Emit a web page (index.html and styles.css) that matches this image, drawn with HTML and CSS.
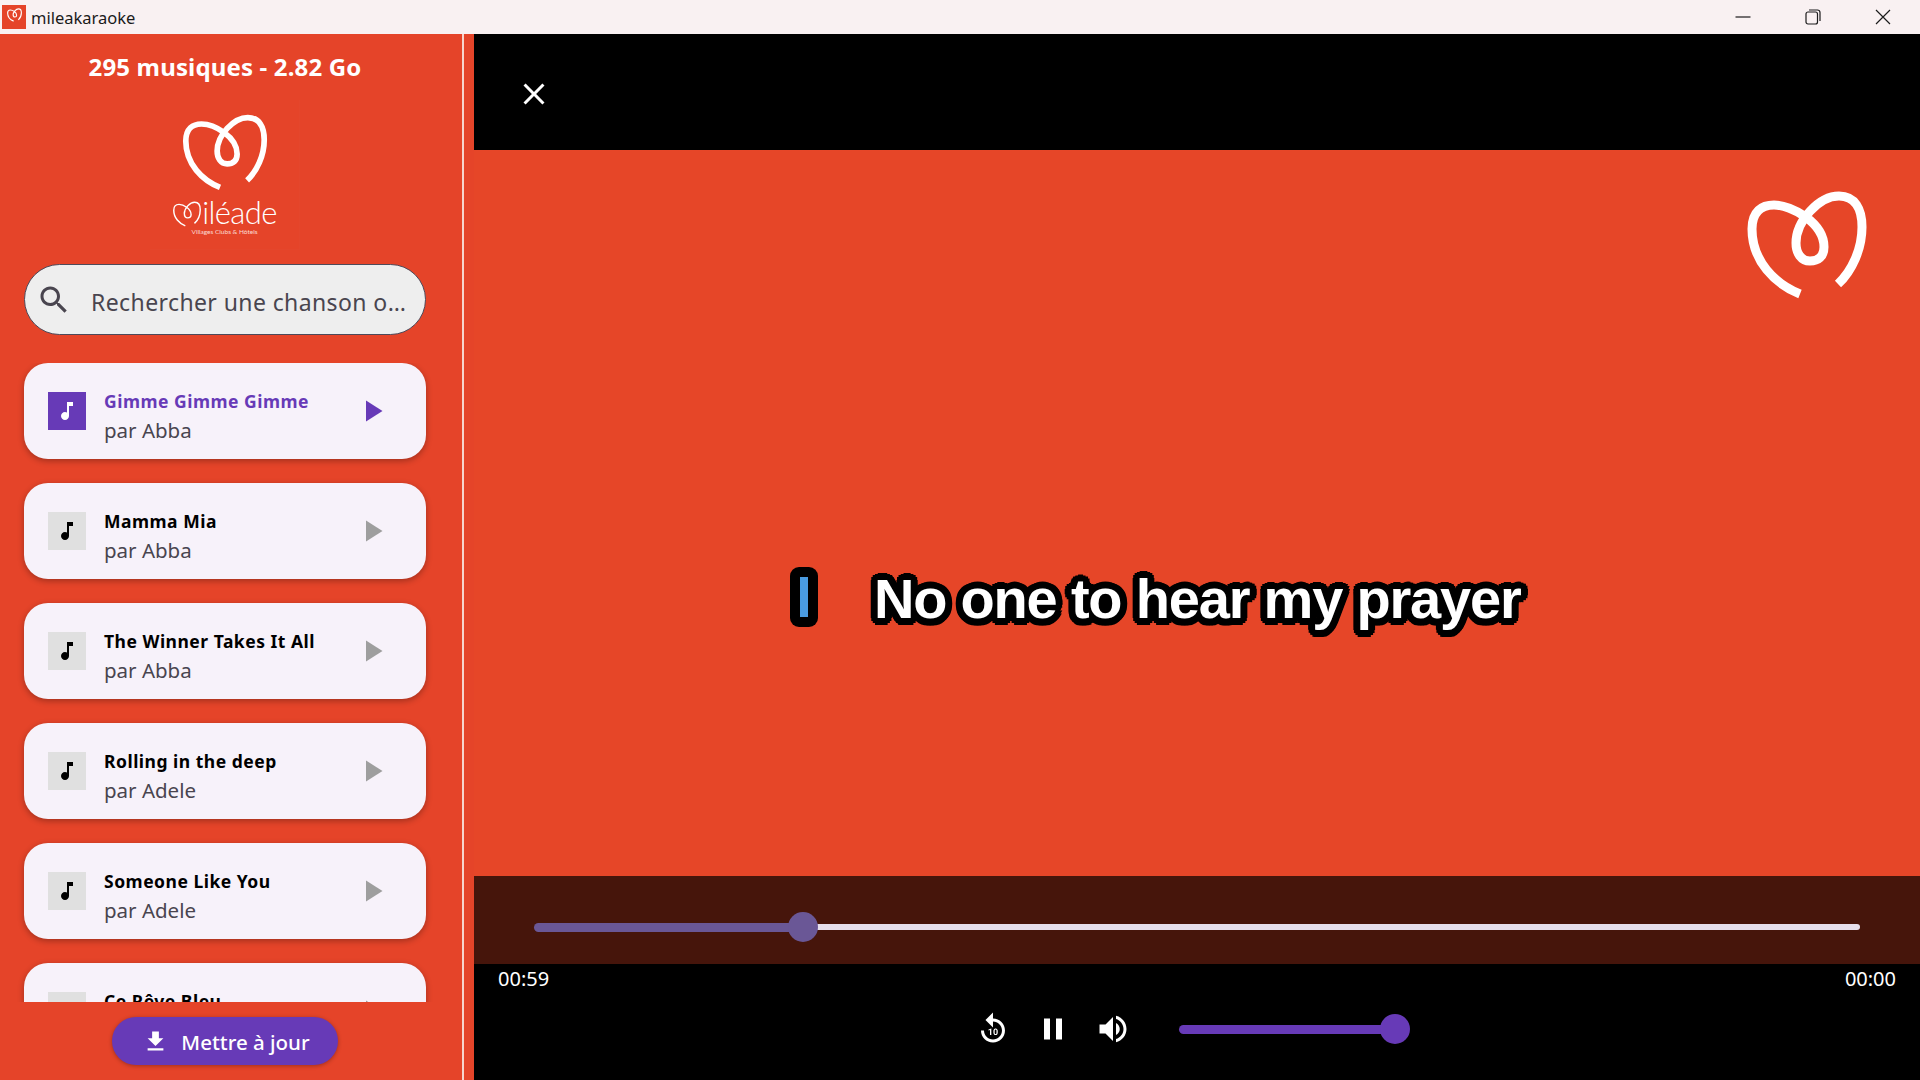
FILE: index.html
```html
<!DOCTYPE html>
<html lang="fr">
<head>
    <meta charset="UTF-8">
    <title>mileakaraoke</title>
    <link rel="stylesheet" href="styles.css">
</head>
<body>
    <svg class="defs" width="0" height="0">
        <symbol id="heart" viewBox="0 0 120 108">
            <path d="M53 103 C28 93 5 70 5 38 C5 20 15 14 27 14 C45 14 77 32 77 56 C77 66 71 70 63 70 C54 70 49 62 49 52 C49 30 72 5 92 5 C108 5 115 18 115 36 C115 58 105 80 91 93"/>
        </symbol>
        <symbol id="note" viewBox="0 0 24 24"><path d="M12 3v10.55c-.59-.34-1.27-.55-2-.55-2.21 0-4 1.79-4 4s1.79 4 4 4 4-1.79 4-4V7h4V3h-6z"/></symbol>
        <symbol id="play" viewBox="0 0 24 24"><path d="M8 5v14l11-7z"/></symbol>
    </svg>

    <header class="titlebar">
        <span class="app-icon"><svg class="heart-mini"><use href="#heart"/></svg></span>
        <span class="app-name">mileakaraoke</span>
        <div class="win-buttons">
            <span class="win-btn"><svg width="16" height="16" viewBox="0 0 16 16"><path d="M0.5 8h15"/></svg></span>
            <span class="win-btn"><svg width="16" height="16" viewBox="0 0 16 16"><rect x="1" y="3" width="11.5" height="12" rx="2"/><path d="M4 1h8.5a2.5 2.5 0 0 1 2.5 2.5V12"/></svg></span>
            <span class="win-btn"><svg width="16" height="16" viewBox="0 0 16 16"><path d="M1 1l14 14M15 1L1 15"/></svg></span>
        </div>
    </header>

    <div class="body">
        <aside class="sidebar">
            <h1 class="count">295 musiques - 2.82 Go</h1>

            <div class="logo">
                <svg class="heart-big"><use href="#heart"/></svg>
                <div class="wordmark">
                    <svg class="heart-word"><use href="#heart"/></svg>
                    <span class="wordmark-text">iléade</span>
                </div>
                <div class="tagline">Villages Clubs &amp; Hôtels</div>
            </div>

            <div class="search">
                <svg class="search-icon" viewBox="0 0 24 24"><path d="M15.5 14h-.79l-.28-.27C15.41 12.59 16 11.11 16 9.5 16 5.91 13.09 3 9.5 3S3 5.91 3 9.5 5.91 16 9.5 16c1.61 0 3.09-.59 4.23-1.57l.27.28v.79l5 4.99L20.49 19l-4.99-5zm-6 0C7.01 14 5 11.99 5 9.5S7.01 5 9.5 5 14 7.01 14 9.5 11.99 14 9.5 14z"/></svg>
                <span class="search-text">Rechercher une chanson o…</span>
            </div>

            <div class="songs">
                <div class="song active">
                    <span class="thumb"><svg><use href="#note"/></svg></span>
                    <div class="song-info"><div class="song-title">Gimme Gimme Gimme</div><div class="song-artist">par Abba</div></div>
                    <svg class="song-play"><use href="#play"/></svg>
                </div>
                <div class="song">
                    <span class="thumb"><svg><use href="#note"/></svg></span>
                    <div class="song-info"><div class="song-title">Mamma Mia</div><div class="song-artist">par Abba</div></div>
                    <svg class="song-play"><use href="#play"/></svg>
                </div>
                <div class="song">
                    <span class="thumb"><svg><use href="#note"/></svg></span>
                    <div class="song-info"><div class="song-title">The Winner Takes It All</div><div class="song-artist">par Abba</div></div>
                    <svg class="song-play"><use href="#play"/></svg>
                </div>
                <div class="song">
                    <span class="thumb"><svg><use href="#note"/></svg></span>
                    <div class="song-info"><div class="song-title">Rolling in the deep</div><div class="song-artist">par Adele</div></div>
                    <svg class="song-play"><use href="#play"/></svg>
                </div>
                <div class="song">
                    <span class="thumb"><svg><use href="#note"/></svg></span>
                    <div class="song-info"><div class="song-title">Someone Like You</div><div class="song-artist">par Adele</div></div>
                    <svg class="song-play"><use href="#play"/></svg>
                </div>
                <div class="song">
                    <span class="thumb"><svg><use href="#note"/></svg></span>
                    <div class="song-info"><div class="song-title">Ce Rêve Bleu</div><div class="song-artist">&nbsp;</div></div>
                    <svg class="song-play"><use href="#play"/></svg>
                </div>
            </div>

            <div class="footer">
                <button class="update">
                    <svg viewBox="0 0 24 24"><path d="M19 9h-4V3H9v6H5l7 7 7-7zM5 18v2h14v-2H5z"/></svg>
                    Mettre à jour
                </button>
            </div>
        </aside>
        <div class="divider"></div>

        <main class="player">
            <div class="top-bar">
                <svg class="close" viewBox="0 0 24 24"><path d="M19 6.41L17.59 5 12 10.59 6.41 5 5 6.41 10.59 12 5 17.59 6.41 19 12 13.41 17.59 19 19 17.59 13.41 12z"/></svg>
            </div>

            <div class="video">
                <svg class="heart-corner"><use href="#heart"/></svg>
                <div class="lyrics">
                    <span class="cursor"><span class="cursor-fill"></span></span>
                    <span class="lyric-line">No one to hear my prayer</span>
                </div>
            </div>

            <div class="progress">
                <div class="track-played" style="width: 20.29%"><span class="thumb-dot"></span></div>
                <div class="track-left"></div>
            </div>

            <div class="controls">
                <div class="times"><span>00:59</span><span>00:00</span></div>
                <div class="buttons">
                    <span class="ctl"><svg viewBox="0 0 24 24"><path d="M11.99 5V1l-5 5 5 5V7c3.31 0 6 2.69 6 6s-2.69 6-6 6-6-2.69-6-6h-2c0 4.42 3.58 8 8 8s8-3.58 8-8-3.58-8-8-8zm-1.1 11H10v-3.26L9 13v-.69l1.8-.63h.09V16zm4.28-1.76c0 .32-.03.6-.1.82s-.17.42-.29.57-.28.26-.45.33-.37.1-.59.1-.41-.03-.59-.1-.33-.18-.46-.33-.23-.34-.3-.57-.11-.5-.11-.82v-.74c0-.32.03-.6.1-.82s.17-.42.29-.57.28-.26.45-.33.37-.1.59-.1.41.03.59.1.33.18.46.33.23.34.3.57.11.5.11.82v.74zm-.85-.86c0-.19-.01-.35-.04-.48s-.07-.23-.12-.31-.11-.14-.19-.17-.16-.05-.25-.05-.18.02-.25.05-.14.09-.19.17-.09.18-.12.31-.04.29-.04.48v.97c0 .19.01.35.04.48s.07.24.12.32.11.14.19.17.16.05.25.05.18-.02.25-.05.14-.09.19-.17.09-.19.11-.32.04-.29.04-.48v-.97z"/></svg></span>
                    <span class="ctl"><svg viewBox="0 0 24 24"><path d="M6 19h4V5H6v14zm8-14v14h4V5h-4z"/></svg></span>
                    <span class="ctl"><svg viewBox="0 0 24 24"><path d="M3 9v6h4l5 5V4L7 9H3zm13.5 3c0-1.77-1.02-3.29-2.5-4.03v8.05c1.48-.73 2.5-2.25 2.5-4.02zM14 3.23v2.06c2.89.86 5 3.54 5 6.71s-2.11 5.85-5 6.71v2.06c4.01-.91 7-4.49 7-8.77s-2.99-7.86-7-8.77z"/></svg></span>
                    <div class="volume"><span class="volume-dot"></span></div>
                </div>
            </div>
        </main>
    </div>
</body>
</html>
```

FILE: styles.css
```css
* {
    box-sizing: border-box;
}
html, body {
    margin: 0;
    height: 100%;
    overflow: hidden;
}
body {
    display: flex;
    flex-direction: column;
    font-family: "Noto Sans", "Open Sans", sans-serif;
    background-color: #e54429;
}
.defs {
    position: absolute;
}
#heart path {
    fill: none;
    stroke: inherit;
}

/* window title bar */
.titlebar {
    display: flex;
    align-items: center;
    height: 34px;
    flex-shrink: 0;
    padding-left: 2px;
    background-color: #f9f1f2;
}
.app-icon {
    display: flex;
    align-items: center;
    justify-content: center;
    width: 24px;
    height: 24px;
    background-color: #e54429;
}
.heart-mini {
    width: 15px;
    height: 14px;
    margin-bottom: 5px;
    stroke: #fff;
    stroke-width: 9;
}
.app-name {
    margin-left: 5px;
    font-size: 16.5px;
    color: #1a1a1a;
}
.win-buttons {
    display: flex;
    margin-left: auto;
    margin-right: 2px;
}
.win-btn {
    display: flex;
    align-items: center;
    justify-content: center;
    width: 70px;
    height: 34px;
}
.win-btn svg {
    fill: none;
    stroke: #1c1c1c;
    stroke-width: 1.2;
}

.body {
    display: flex;
    flex: 1;
    min-height: 0;
}

/* left column */
.sidebar {
    display: flex;
    flex-direction: column;
    width: 462px;
    flex-shrink: 0;
    padding-right: 12px;
}
.divider {
    width: 1.5px;
    margin-right: 10.5px;
    background-color: #f7d5cd;
}
.count {
    margin: 16px 0 0;
    font-size: 24px;
    line-height: 34px;
    font-weight: 700;
    letter-spacing: 0.15px;
    text-align: center;
    color: #fff;
}
.logo {
    display: flex;
    flex-direction: column;
    align-items: center;
    width: 150px;
    height: 150px;
    margin: 16px auto 0;
    padding-top: 14px;
    border-right: 1px solid #e4462c;
    border-bottom: 1px solid #e4462c;
}
.heart-big {
    width: 86px;
    height: 77px;
    stroke: #fff;
    stroke-width: 8;
}
.wordmark {
    display: flex;
    align-items: flex-end;
    height: 30px;
    margin-top: 6px;
    color: #fff;
}
.heart-word {
    width: 30px;
    height: 26px;
    stroke: #fff;
    stroke-width: 6;
}
.wordmark-text {
    font-family: Lato, sans-serif;
    font-weight: 300;
    font-size: 31px;
    line-height: 30px;
    letter-spacing: -0.6px;
}
.tagline {
    margin-top: 1px;
    font-family: Lato, sans-serif;
    font-size: 6.5px;
    color: #fbdcd5;
}
.search {
    display: flex;
    align-items: center;
    width: 402px;
    height: 71px;
    margin: 14px 0 0 24px;
    padding-left: 11px;
    border: 1.5px solid #4d4a5a;
    border-radius: 36px;
    background-color: #eeeeee;
}
.search-icon {
    width: 36px;
    height: 36px;
    fill: #49454f;
}
.search-text {
    margin: 4px 0 0 19px;
    font-size: 23px;
    letter-spacing: 0.4px;
    white-space: nowrap;
    color: #49454f;
}

/* song list */
.songs {
    display: flex;
    flex-direction: column;
    gap: 24px;
    flex: 1;
    min-height: 0;
    overflow: hidden;
    margin-top: 28px;
    padding: 0 24px;
}
.song {
    display: flex;
    align-items: center;
    flex-shrink: 0;
    height: 96px;
    padding: 0 36px 0 24px;
    border-radius: 24px;
    background-color: #f7f2fa;
    box-shadow: 0 2px 6px rgba(0, 0, 0, 0.3);
}
.thumb {
    display: flex;
    align-items: center;
    justify-content: center;
    width: 38px;
    height: 38px;
    flex-shrink: 0;
    background-color: #e0e0e0;
}
.thumb svg {
    width: 24px;
    height: 24px;
    fill: #000;
}
.song-info {
    flex: 1;
    margin-left: 18px;
    padding-top: 9px;
}
.song-title {
    font-size: 17.5px;
    line-height: 26px;
    font-weight: 700;
    letter-spacing: 0.5px;
    color: #000;
}
.song-artist {
    margin-top: 2px;
    font-size: 20.5px;
    line-height: 28px;
    color: #49454f;
}
.song-play {
    width: 36px;
    height: 36px;
    fill: #9e9e9e;
}
.song.active .thumb {
    background-color: #673ab7;
}
.song.active .thumb svg {
    fill: #fff;
}
.song.active .song-title {
    color: #673ab7;
}
.song.active .song-play {
    fill: #673ab7;
}

.footer {
    display: flex;
    justify-content: center;
    height: 78px;
    flex-shrink: 0;
    padding-top: 15px;
}
.update {
    display: flex;
    align-items: center;
    justify-content: center;
    width: 226px;
    height: 48px;
    padding: 2px 0 0 2px;
    border: none;
    border-radius: 24px;
    font-family: inherit;
    font-size: 20.5px;
    font-weight: 500;
    color: #fff;
    background-color: #673ab7;
    box-shadow: 0 1px 4px rgba(0, 0, 0, 0.3);
}
.update svg {
    width: 27px;
    height: 27px;
    margin: -2px 12px 0 0;
    fill: #fff;
}

/* player */
.player {
    display: flex;
    flex-direction: column;
    flex: 1;
    min-width: 0;
}
.top-bar {
    display: flex;
    align-items: center;
    height: 116px;
    flex-shrink: 0;
    padding: 4px 0 0 42px;
    background-color: #000;
}
.close {
    width: 36px;
    height: 36px;
    fill: #fff;
}
.video {
    position: relative;
    flex: 1;
    min-height: 0;
    background-color: #e64628;
}
.heart-corner {
    position: absolute;
    top: 41px;
    right: 52px;
    width: 122px;
    height: 108px;
    stroke: #fff;
    stroke-width: 9;
}
.lyrics {
    display: flex;
    align-items: center;
    padding: 414px 0 0 316px;
}
.cursor {
    display: flex;
    align-items: center;
    justify-content: center;
    width: 28px;
    height: 60px;
    border-radius: 9px;
    background-color: #000;
}
.cursor-fill {
    width: 8px;
    height: 40px;
    background-color: #4a9be0;
}
/* rounded outline, stacked shadows give softer corners than text-stroke */
.lyric-line {
    margin: 0 0 0 56px;
    font-family: "Liberation Sans", sans-serif;
    font-size: 56px;
    font-weight: 700;
    letter-spacing: -1.2px;
    white-space: nowrap;
    color: #fff;
    text-shadow:
        7px 0 0 #000, -7px 0 0 #000, 0 7px 0 #000, 0 -7px 0 #000,
        5px 5px 0 #000, -5px 5px 0 #000, 5px -5px 0 #000, -5px -5px 0 #000,
        6.5px 2.7px 0 #000, -6.5px 2.7px 0 #000, 6.5px -2.7px 0 #000, -6.5px -2.7px 0 #000,
        2.7px 6.5px 0 #000, -2.7px 6.5px 0 #000, 2.7px -6.5px 0 #000, -2.7px -6.5px 0 #000;
    transform: translateY(2px);
}
.progress {
    display: flex;
    align-items: center;
    height: 88px;
    flex-shrink: 0;
    padding: 14px 60px 0;
    background-color: #46150b;
}
.track-played {
    position: relative;
    height: 9px;
    border-radius: 5px 0 0 5px;
    background-color: #6a5796;
}
.thumb-dot {
    position: absolute;
    top: -10.5px;
    right: -15px;
    width: 30px;
    height: 30px;
    border-radius: 50%;
    background-color: #6a5796;
}
.track-left {
    flex: 1;
    height: 6px;
    border-radius: 0 3px 3px 0;
    background-color: #e6dfec;
}
.controls {
    height: 116px;
    flex-shrink: 0;
    background-color: #000;
}
.times {
    display: flex;
    justify-content: space-between;
    padding: 1px 24px 0;
    font-size: 20px;
    line-height: 28px;
    color: #fff;
}
.buttons {
    display: flex;
    align-items: center;
    padding: 18px 0 0 489px;
}
.ctl {
    display: flex;
    justify-content: center;
    width: 60px;
}
.ctl svg {
    width: 36px;
    height: 36px;
    fill: #fff;
}
.volume {
    position: relative;
    width: 216px;
    height: 9px;
    margin-left: 36px;
    border-radius: 5px 0 0 5px;
    background-color: #673ab7;
}
.volume-dot {
    position: absolute;
    top: -10.5px;
    right: -15px;
    width: 30px;
    height: 30px;
    border-radius: 50%;
    background-color: #673ab7;
}
```
